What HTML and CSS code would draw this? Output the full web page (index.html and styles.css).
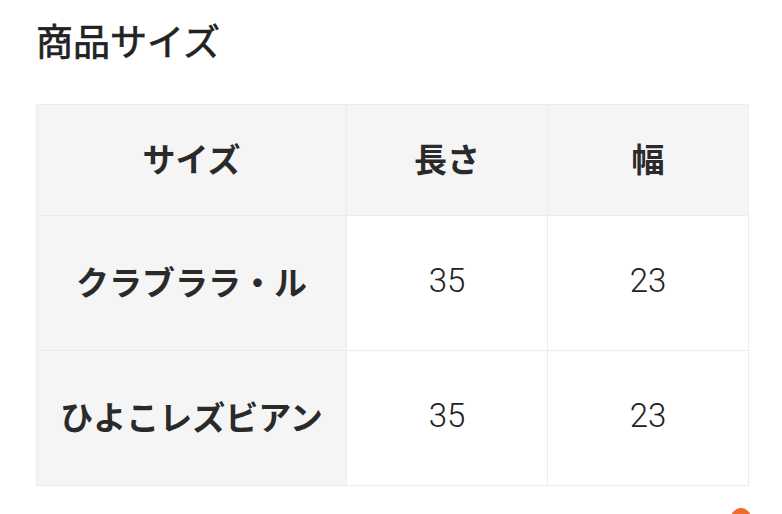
FILE: index.html
```html
<!DOCTYPE html>
<html lang="ja">
<head>
<meta charset="utf-8">
<link rel="stylesheet" href="styles.css">
</head>
<body>
<section class="size">
  <h2 class="title">商品サイズ</h2>
  <table class="size-table">
    <colgroup>
      <col class="c1"><col class="c2"><col class="c3">
    </colgroup>
    <thead>
      <tr class="head-row">
        <th>サイズ</th>
        <th>長さ</th>
        <th>幅</th>
      </tr>
    </thead>
    <tbody>
      <tr class="body-row">
        <th>クラブララ・ル</th>
        <td>35</td>
        <td>23</td>
      </tr>
      <tr class="body-row">
        <th>ひよこレズビアン</th>
        <td>35</td>
        <td>23</td>
      </tr>
    </tbody>
  </table>
</section>
<div class="fab"></div>
</body>
</html>
```

FILE: styles.css
```css
html, body {
  margin: 0;
  padding: 0;
  background: #fff;
}
body {
  font-family: Roboto, "Noto Sans CJK JP", sans-serif;
  color: #222;
  overflow: hidden;
  height: 514px;
  position: relative;
}
.size {
  padding: 0 34px 0 36px;
}
.title {
  margin: 0;
  padding-top: 17px;
  font-size: 37px;
  line-height: 54px;
  font-weight: 400;
  -webkit-text-stroke: 0.7px #222;
  color: #222;
  height: 87px;
}
.size-table {
  width: 712px;
  border-collapse: collapse;
  table-layout: fixed;
}
.c1 { width: 310px; }
.c2 { width: 201px; }
.c3 { width: 201px; }
.size-table th,
.size-table td {
  border: 1px solid #ececec;
  text-align: center;
  vertical-align: middle;
  font-size: 33px;
  padding: 0 0 5px;
}
.size-table th {
  background: #f5f5f5;
  font-weight: 700;
  color: #2a2a2a;
}
.size-table td {
  font-weight: 300;
  color: #222;
}
.head-row { height: 111px; }
.body-row { height: 135px; }
.fab {
  position: absolute;
  left: 731px;
  top: 508px;
  width: 20px;
  height: 20px;
  border-radius: 50%;
  background: #ef6a2e;
}
```
